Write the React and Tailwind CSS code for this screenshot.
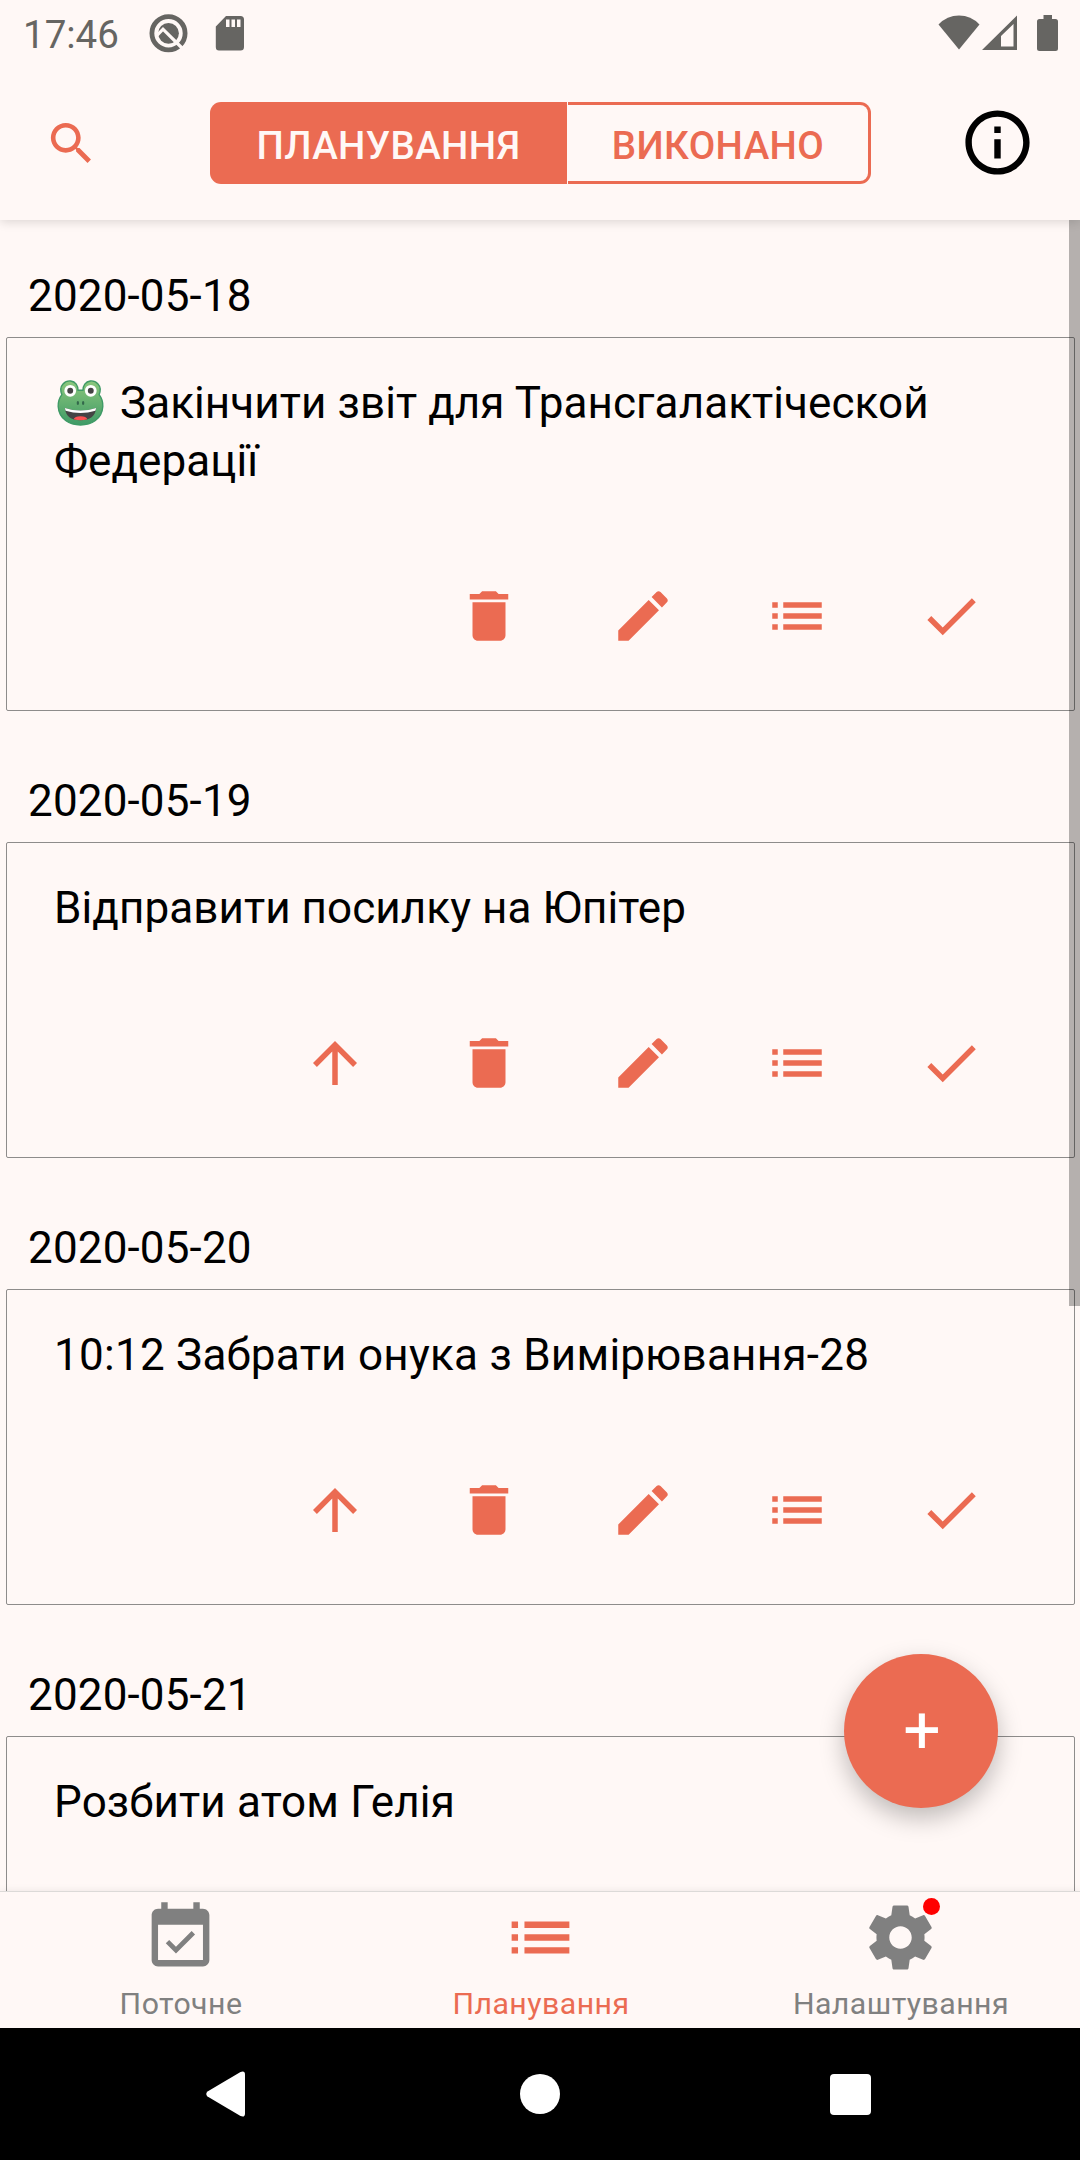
import React from "react";

const TRASH = "M6 19c0 1.1.9 2 2 2h8c1.1 0 2-.9 2-2V7H6v12zM19 4h-3.5l-1-1h-5l-1 1H5v2h14V4z";
const PENCIL = "M3 17.25V21h3.75L17.81 9.94l-3.75-3.75L3 17.25zM20.71 7.04c.39-.39.39-1.02 0-1.41l-2.34-2.34c-.39-.39-1.02-.39-1.41 0l-1.83 1.83 3.75 3.75 1.83-1.83z";
const LIST = "M3 13h2v-2H3v2zm0 4h2v-2H3v2zm0-8h2V7H3v2zm4 4h14v-2H7v2zm0 4h14v-2H7v2zM7 7v2h14V7H7z";
const CHECK = "M9 16.17L4.83 12l-1.42 1.41L9 19 21 7l-1.41-1.41z";
const UP = "M4 12l1.41 1.41L11 7.83V20h2V7.83l5.58 5.59L20 12l-8-8-8 8z";
const SEARCH = "M15.5 14h-.79l-.28-.27C15.41 12.59 16 11.11 16 9.5 16 5.91 13.09 3 9.5 3S3 5.91 3 9.5 5.91 16 9.5 16c1.61 0 3.09-.59 4.23-1.57l.27.28v.79l5 4.99L20.49 19l-4.99-5zm-6 0C7.01 14 5 11.99 5 9.5S7.01 5 9.5 5 14 7.01 14 9.5 11.99 14 9.5 14z";
const INFO = "M11 17h2v-6h-2v6zm1-15C6.48 2 2 6.48 2 12s4.48 10 10 10 10-4.48 10-10S17.52 2 12 2zm0 18c-4.41 0-8-3.59-8-8s3.59-8 8-8 8 3.59 8 8-3.59 8-8 8zM11 9h2V7h-2v2z";
const CALENDAR = "M16.53 11.06L15.47 10l-4.88 4.88-2.12-2.12-1.06 1.06L10.59 17l5.94-5.94zM19 3h-1V1h-2v2H8V1H6v2H5c-1.11 0-1.99.9-1.99 2L3 19c0 1.1.89 2 2 2h14c1.1 0 2-.9 2-2V5c0-1.1-.9-2-2-2zm0 16H5V8h14v11z";
const GEAR = "M19.43 12.98c.04-.32.07-.64.07-.98s-.03-.66-.07-.98l2.11-1.65c.19-.15.24-.42.12-.64l-2-3.46c-.12-.22-.39-.3-.61-.22l-2.49 1c-.52-.4-1.08-.73-1.69-.98l-.38-2.65C14.46 2.18 14.25 2 14 2h-4c-.25 0-.46.18-.49.42l-.38 2.65c-.61.25-1.17.59-1.69.98l-2.49-1c-.23-.09-.49 0-.61.22l-2 3.46c-.13.22-.07.49.12.64l2.11 1.65c-.04.32-.07.65-.07.98s.03.66.07.98l-2.11 1.65c-.19.15-.24.42-.12.64l2 3.46c.12.22.39.3.61.22l2.49-1c.52.4 1.08.73 1.69.98l.38 2.65c.03.24.24.42.49.42h4c.25 0 .46-.18.49-.42l.38-2.65c.61-.25 1.17-.59 1.69-.98l2.49 1c.23.09.49 0 .61-.22l2-3.46c.12-.22.07-.49-.12-.64l-2.11-1.65zM12 15.5c-1.93 0-3.5-1.57-3.5-3.5s1.57-3.5 3.5-3.5 3.5 1.57 3.5 3.5-1.57 3.5-3.5 3.5z";

function Icon({ d, className }) {
  return (
    <svg viewBox="0 0 24 24" fill="currentColor" className={className}>
      <path d={d} />
    </svg>
  );
}

function StatusBar() {
  return (
    <div className="flex h-[66px] items-start justify-between pl-[23px] pr-[22px] text-[#666562]">
      <div className="flex">
        <span className="mt-[12px] w-[126px] text-[38.5px] leading-[45px]">17:46</span>
        <svg viewBox="0 0 40 40" className="mt-[13px] h-[40px] w-[40px]" fill="none">
          <circle cx="19.5" cy="20.3" r="16.6" stroke="currentColor" strokeWidth="4.8" />
          <circle cx="19.5" cy="20.3" r="10.4" fill="currentColor" />
          <path d="M7.500 22.800L14 16.200L34 36" stroke="#fff8f6" strokeWidth="3.2" />
        </svg>
        <svg viewBox="0 0 30 36" className="ml-[26px] mt-[15px] h-[36px] w-[30px]" fill="currentColor">
          <path fillRule="evenodd" d="M11 1H25.5Q29 1 29 4.5V32Q29 35.5 25.5 35.5H4Q.8 35.5.8 32V11.5ZM11 4.5V12h3.5V4.5ZM16.5 4.5V12H20V4.5ZM22 4.5V12h3.5V4.5Z" />
        </svg>
      </div>
      <div className="flex pt-[15px]">
        <svg viewBox="0 0 42 36" className="h-[36px] w-[42px]" fill="currentColor">
          <path d="M21 34.5L.5 9.5Q9 .5 21 .5T41.5 9.5Z" />
        </svg>
        <svg viewBox="0 0 36 36" className="ml-[2px] h-[36px] w-[36px]" fill="currentColor">
          <path fillRule="evenodd" d="M0 35L35 .5V35ZM19 31.5H31.5V9L19 21Z" />
        </svg>
        <svg viewBox="0 0 21 36" className="ml-[19px] h-[36px] w-[21px]" fill="currentColor">
          <path d="M6.5 0h8.500v4H18.500Q21 4 21 6.500V33.500Q21 36 18.500 36H2.500Q0 36 0 33.500V6.500Q0 4 2.500 4H6.500Z" />
        </svg>
      </div>
    </div>
  );
}

function Header() {
  return (
    <header className="relative z-10 h-[220px] shrink-0 bg-[#fff8f6] shadow-[0_2px_10px_rgba(0,0,0,0.14)]">
      <StatusBar />
      <div className="flex pl-[44px] pt-[36px]">
        <Icon d={SEARCH} className="mt-[14px] h-[55px] w-[55px] text-[#eb6b52]" />
        <div className="ml-[111px] flex h-[82px] text-[38.5px] font-medium tracking-[0.4px]">
          <button className="w-[357px] rounded-l-[11px] bg-[#eb6b52] pt-[3px] text-center leading-[82px] text-[#fff8f6]">
            ПЛАНУВАННЯ
          </button>
          <button className="ml-px w-[303px] rounded-r-[11px] border-y-[3px] border-r-[3px] border-[#eb6b52] pt-[3px] text-center leading-[76px] text-[#eb6b52]">
            ВИКОНАНО
          </button>
        </div>
        <Icon d={INFO} className="ml-[88px] mt-[2px] h-[77px] w-[77px] text-black" />
      </div>
    </header>
  );
}

function Frog() {
  return (
    <svg role="img" aria-label="🐸" viewBox="0 0 48 48" className="ml-[3px] mr-[16px] inline-block h-[47px] w-[47px] align-[-8px]">
      <defs>
        <linearGradient id="frogSkin" x1="0" y1="0" x2="0" y2="1">
          <stop offset="0" stopColor="#8bc77c" />
          <stop offset="1" stopColor="#3f9a66" />
        </linearGradient>
      </defs>
      <path d="M5 16C1 6 9 1.500 14 2C19 2.500 21.500 7 21.500 11.500H26.500C26.500 7 29 2.500 34 2C39 1.500 47 6 43 16Q47 21 46.800 28C46 41 35 47 24 47S2 41 1.200 28Q1 21 5 16Z" fill="url(#frogSkin)" stroke="#3f9a66" strokeWidth="1.4" />
      <circle cx="13.500" cy="12" r="6" fill="#fff" />
      <circle cx="34.500" cy="12" r="6" fill="#fff" />
      <circle cx="13.500" cy="12" r="3" fill="#444" />
      <circle cx="34.500" cy="12" r="3" fill="#444" />
      <ellipse cx="21.300" cy="24.500" rx="1.200" ry="2" fill="#33684b" />
      <ellipse cx="26.700" cy="24.500" rx="1.200" ry="2" fill="#33684b" />
      <path d="M8 29.500Q24 35 40 29.500C39 38 34 42 24 42S9 38 8 29.500Z" fill="#444" />
      <path d="M8 29.500Q24 35 40 29.500L39.200 32.500Q24 37 8.800 32.500Z" fill="#fff" />
      <path d="M17 41Q18 38 24 38T31 41Q24 43 17 41Z" fill="#fb5252" />
    </svg>
  );
}

const TASKS = [
  { date: "2020-05-18", text: "Закінчити звіт для Трансгалактіческой Федерації", tracking: "tracking-[0.08px]", frog: true },
  { date: "2020-05-19", text: "Відправити посилку на Юпітер", tracking: "tracking-[0.08px]", movable: true },
  { date: "2020-05-20", text: "10:12 Забрати онука з Вимірювання-28", tracking: "tracking-[0.26px]", movable: true },
  { date: "2020-05-21", text: "Розбити атом Гелія", tracking: "tracking-[0.15px]", movable: true },
];

function Task({ task }) {
  const icons = [...(task.movable ? [UP] : []), TRASH, PENCIL, LIST, CHECK];
  return (
    <section className="mb-[38px]">
      <h2 className="h-[93px] pl-[28px] pt-[23px] text-[44px] leading-[58px] tracking-[0.15px]">{task.date}</h2>
      <article className="ml-[6px] mr-[5px] rounded-[2px] border border-[#8e8c8b] px-[47px] pb-[61px] pt-[36px]">
        <p className={"text-[44px] leading-[58px] " + task.tracking}>
          {task.frog && <Frog />}
          {task.text}
        </p>
        <div className="mt-[93px] flex justify-end gap-[88px] pr-[43px] text-[#eb6b52]">
          {icons.map((d) => (
            <Icon key={d} d={d} className="h-[66px] w-[66px]" />
          ))}
        </div>
      </article>
    </section>
  );
}

function Tab({ d, label, active, badge }) {
  return (
    <button className={active ? "flex flex-1 flex-col items-center text-[#eb6b52]" : "flex flex-1 flex-col items-center text-[#808080]"}>
      <span className="relative mt-[7px]">
        <Icon d={d} className="h-[77px] w-[77px]" />
        {badge && <span className="absolute right-[-1px] top-[-1px] h-[17px] w-[17px] rounded-full bg-[#ff0000]" />}
      </span>
      <span className="mt-[10px] pl-[2px] text-[30.25px] leading-[36px] tracking-[0.45px]">{label}</span>
    </button>
  );
}

export default function App() {
  return (
    <div className="flex h-[2160px] w-[1080px] flex-col overflow-hidden bg-[#fff8f6] font-['Roboto',sans-serif] text-black">
      <Header />
      <main className="relative min-h-0 flex-1 overflow-hidden">
        <div className="pt-[24px]">
          {TASKS.map((t) => (
            <Task key={t.date} task={t} />
          ))}
        </div>
        <div className="absolute right-0 top-0 h-[1086px] w-[11px] bg-black/29" />
        <button className="absolute bottom-[83px] right-[82px] h-[154px] w-[154px] rounded-full bg-[#eb6b52] pl-[2px] text-center text-[66px] leading-[154px] text-white shadow-[0_10px_24px_rgba(0,0,0,0.25)]">
          +
        </button>
      </main>
      <nav className="relative flex h-[137px] shrink-0 border-t border-[#dcdad8] bg-[#fff8f6] shadow-[0_0_8px_rgba(0,0,0,0.08)]">
        <Tab d={CALENDAR} label="Поточне" />
        <Tab d={LIST} label="Планування" active />
        <Tab d={GEAR} label="Налаштування" badge />
      </nav>
      <footer className="flex h-[132px] shrink-0 items-center bg-black pl-[206px] text-white">
        <svg viewBox="0 0 39 46" className="h-[46px] w-[39px]" fill="currentColor">
          <path d="M1.500 20.500L34.500.9Q39-.8 39 3.500V42.500Q39 46.800 34.500 45.100L1.500 25.500Q-1 23 1.500 20.500Z" />
        </svg>
        <span className="ml-[275px] h-[40px] w-[40px] rounded-full bg-white" />
        <span className="ml-[270px] h-[41px] w-[41px] rounded-[4px] bg-white" />
      </footer>
    </div>
  );
}
